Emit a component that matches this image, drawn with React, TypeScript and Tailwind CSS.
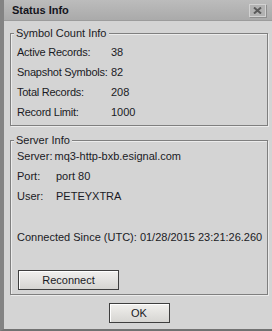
import React from "react";

const font = { fontFamily: '"Liberation Sans", Arial, sans-serif' };

function GroupBox({
  title,
  className,
  children,
}: {
  title: string;
  className?: string;
  children: React.ReactNode;
}) {
  return (
    <div
      className={
        "relative ml-[6px] mr-[4px] border border-[#7f7f7f] shadow-[inset_1px_1px_0_#ececec,1px_1px_0_#ececec] " +
        (className ?? "")
      }
    >
      <span className="absolute left-[3px] top-[-7px] whitespace-nowrap bg-[#d4d4d4] px-[2px] text-[11px] leading-[13px] text-[#1a1a24]">
        {title}
      </span>
      {children}
    </div>
  );
}

function Button({ label, className }: { label: string; className?: string }) {
  return (
    <div
      className={
        "flex h-[20px] items-center justify-center border border-[#3e3e3e] bg-gradient-to-b from-[#f1f0ee] to-[#d6d5d2] text-[11px] text-[#1a1a24] shadow-[inset_1px_1px_0_#ffffff] " +
        (className ?? "")
      }
    >
      {label}
    </div>
  );
}

export default function App() {
  return (
    <div
      style={font}
      className="flex h-[331px] w-[272px] flex-col whitespace-nowrap border-b-2 border-l-4 border-b-[#727272] border-l-[#838383] bg-[#d4d4d4] text-[11px] text-[#1a1a24]"
    >
      {/* Title bar */}
      <div className="flex h-[21px] shrink-0 items-center justify-between border-b border-[#9c9c9c] bg-gradient-to-b from-[#bcbcbc] to-[#aaaaaa] pl-[8px] pr-[6px]">
        <span className="text-[11px] font-bold text-[#14141c]">Status Info</span>
        <div className="flex h-[13px] w-[17px] items-center justify-center border border-[#d2d2d2] bg-[#b2b2b2] shadow-[1px_1px_0_#8e8e8e]">
          <svg width="9" height="7" viewBox="0 0 9 7">
            <path d="M1 0.5 L8 6.5 M8 0.5 L1 6.5" stroke="#5a5a5a" strokeWidth="2" />
          </svg>
        </div>
      </div>

      {/* Symbol Count Info */}
      <GroupBox title="Symbol Count Info" className="mt-[12px] h-[93px] pt-[8px]">
        {[
          ["Active Records:", "38"],
          ["Snapshot Symbols:", "82"],
          ["Total Records:", "208"],
          ["Record Limit:", "1000"],
        ].map(([k, v]) => (
          <div key={k} className="flex h-[20px] items-center pl-[6px]">
            <span className="w-[94px] shrink-0 whitespace-nowrap tracking-[-0.25px]">{k}</span>
            <span className="whitespace-nowrap">{v}</span>
          </div>
        ))}
      </GroupBox>

      {/* Server Info */}
      <GroupBox title="Server Info" className="mt-[14px] h-[155px] pt-[5px]">
        <div className="flex h-[20px] items-center pl-[6px]">
          <span>Server:</span>
          <span className="ml-[2px]">mq3-http-bxb.esignal.com</span>
        </div>
        <div className="flex h-[20px] items-center pl-[6px]">
          <span className="w-[39px] shrink-0">Port:</span>
          <span>port 80</span>
        </div>
        <div className="flex h-[20px] items-center pl-[6px]">
          <span className="w-[39px] shrink-0">User:</span>
          <span>PETEYXTRA</span>
        </div>
        <div className="h-[21px]" />
        <div className="flex h-[20px] items-center pl-[6px]">
          <span>Connected Since (UTC): 01/28/2015 23:21:26.260</span>
        </div>
        <Button label="Reconnect" className="ml-[7px] mt-[23px] w-[101px]" />
      </GroupBox>

      {/* OK */}
      <div className="mt-[8px] flex justify-center pl-[2px]">
        <Button label="OK" className="w-[61px]" />
      </div>
    </div>
  );
}
